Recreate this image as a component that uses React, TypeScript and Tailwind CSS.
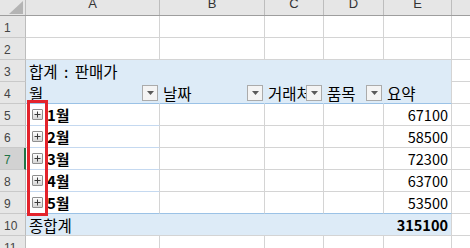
import React from "react";

const kr = "font-['Noto_Sans_CJK_KR','Noto_Sans',sans-serif]";
const latin = "font-['Liberation_Sans',Arial,sans-serif]";

const colW = ["w-[134px]", "w-[105px]", "w-[59px]", "w-[60px]", "w-[68px]"];
const letters = ["A", "B", "C", "D", "E"];

function RowHead({ n, selected }: { n: number; selected?: boolean }) {
  return (
    <div
      className={`w-[26px] shrink-0 flex items-center pl-[4px] pt-[2px] border-b border-b-[#c9c9c9] text-[12px] ${latin} ${
        selected
          ? "bg-[#d2d2d2] text-[#217346] border-r-2 border-r-[#217346]"
          : "bg-[#e6e6e6] text-[#444] border-r border-r-[#bdbdbd]"
      }`}
    >
      {n}
    </div>
  );
}

function FilterButton() {
  return (
    <div className="w-[16px] h-[16px] shrink-0 mr-[1px] border border-[#ababab] bg-[#f4f4f4] flex items-center justify-center">
      <svg width="7" height="4" viewBox="0 0 7 4">
        <path d="M0 0h7L3.5 4z" fill="#5a5a5a" />
      </svg>
    </div>
  );
}

function PlusBox() {
  return (
    <div className="w-[11px] h-[11px] shrink-0 border border-[#8f8f8f] rounded-[1px] bg-linear-to-b from-white to-[#d6d6d6] flex items-center justify-center">
      <svg width="7" height="7" viewBox="0 0 7 7">
        <path d="M3.5 0.5v6M0.5 3.5h6" stroke="#3a3a3a" strokeWidth="1" />
      </svg>
    </div>
  );
}

function PlainRow({ n }: { n: number }) {
  return (
    <div className="flex h-[22px]">
      <RowHead n={n} />
      {colW.map((w) => (
        <div key={w} className={`${w} shrink-0 border-r border-b border-[#d4d4d4]`} />
      ))}
      <div className="flex-1 border-b border-[#d4d4d4]" />
    </div>
  );
}

const months = [
  { m: "1월", v: "67100" },
  { m: "2월", v: "58500" },
  { m: "3월", v: "72300" },
  { m: "4월", v: "63700" },
  { m: "5월", v: "53500" },
];

const headers = [
  { t: "월", filter: true },
  { t: "날짜", filter: true },
  { t: "거래처", filter: true },
  { t: "품목", filter: true },
  { t: "요약", filter: false },
];

export default function App() {
  return (
    <div className={`relative w-[470px] h-[248px] overflow-hidden bg-white text-black ${kr}`}>
      {/* column header */}
      <div className="flex h-[16px] bg-[#e6e6e6] border-b border-[#9e9e9e]">
        <div className="w-[26px] shrink-0 border-r border-[#bdbdbd] flex items-end justify-end pr-[2px] pb-[1px]">
          <svg width="14" height="13" viewBox="0 0 14 13">
            <path d="M14 0V13H0z" fill="#b4b4b4" />
          </svg>
        </div>
        {colW.map((w, i) => (
          <div
            key={w}
            className={`${w} shrink-0 border-r border-[#bdbdbd] flex items-end justify-center pb-[5px] text-[13px] leading-none text-[#333] ${latin}`}
          >
            {letters[i]}
          </div>
        ))}
        <div className="flex-1" />
      </div>

      <PlainRow n={1} />
      <PlainRow n={2} />

      {/* row 3: pivot title */}
      <div className="flex h-[22px]">
        <RowHead n={3} />
        <div className="w-[426px] shrink-0 bg-[#ddebf7] border-r border-r-[#d4d4d4] flex items-center pl-[3px] text-[15.5px] leading-[20px] whitespace-nowrap [word-spacing:3px]">
          합계 : 판매가
        </div>
        <div className="flex-1 border-b border-[#d4d4d4]" />
      </div>

      {/* row 4: field headers */}
      <div className="flex h-[22px]">
        <RowHead n={4} />
        {headers.map((h, i) => (
          <div
            key={h.t}
            className={`${colW[i]} shrink-0 bg-[#ddebf7] border-b border-b-[#9bc2e6] border-r ${
              i === 4 ? "border-r-[#d4d4d4]" : "border-r-[#ddebf7]"
            } flex items-center`}
          >
            <div className="flex-1 min-w-0 overflow-hidden whitespace-nowrap pl-[3px] text-[15.5px] leading-[20px]">
              {h.t}
            </div>
            {h.filter && <FilterButton />}
          </div>
        ))}
        <div className="flex-1 border-b border-[#d4d4d4]" />
      </div>

      {/* rows 5-9 */}
      {months.map((r, idx) => {
        const last = idx === months.length - 1;
        const bottom = last ? "border-b-[#9bc2e6]" : "border-b-[#d4d4d4]";
        return (
          <div key={r.m} className="flex h-[22px]">
            <RowHead n={5 + idx} selected={idx === 2} />
            <div
              className={`w-[134px] shrink-0 border-r border-r-[#d4d4d4] border-b ${
                last ? "border-b-[#9bc2e6]" : "border-b-[#c5d9f0]"
              } flex items-center pl-[6px] gap-[4px]`}
            >
              <PlusBox />
              <span className="font-bold text-[15px] leading-[20px]">{r.m}</span>
            </div>
            <div className={`w-[105px] shrink-0 border-r border-r-[#d4d4d4] border-b ${bottom}`} />
            <div className={`w-[59px] shrink-0 border-r border-r-[#d4d4d4] border-b ${bottom}`} />
            <div className={`w-[60px] shrink-0 border-r border-r-[#d4d4d4] border-b ${bottom}`} />
            <div
              className={`w-[68px] shrink-0 border-r border-r-[#d4d4d4] border-b ${bottom} flex items-center justify-end pr-[3px] text-[14.5px] leading-[20px]`}
            >
              {r.v}
            </div>
            <div className="flex-1 border-b border-[#d4d4d4]" />
          </div>
        );
      })}

      {/* row 10: grand total */}
      <div className="flex h-[22px]">
        <RowHead n={10} />
        <div className="w-[426px] shrink-0 bg-[#ddebf7] border-r border-r-[#d4d4d4] border-b border-b-[#d4d4d4] flex items-center justify-between pl-[3px] pr-[3px] leading-[20px]">
          <span className="text-[15.5px]">종합계</span>
          <span className="font-bold text-[14.5px]">315100</span>
        </div>
        <div className="flex-1 border-b border-[#d4d4d4]" />
      </div>

      <PlainRow n={11} />

      {/* red highlight around expand buttons */}
      <div className="absolute left-[27px] top-[100px] w-[21px] h-[116px] border-[3px] border-[#e3232c]" />
    </div>
  );
}
